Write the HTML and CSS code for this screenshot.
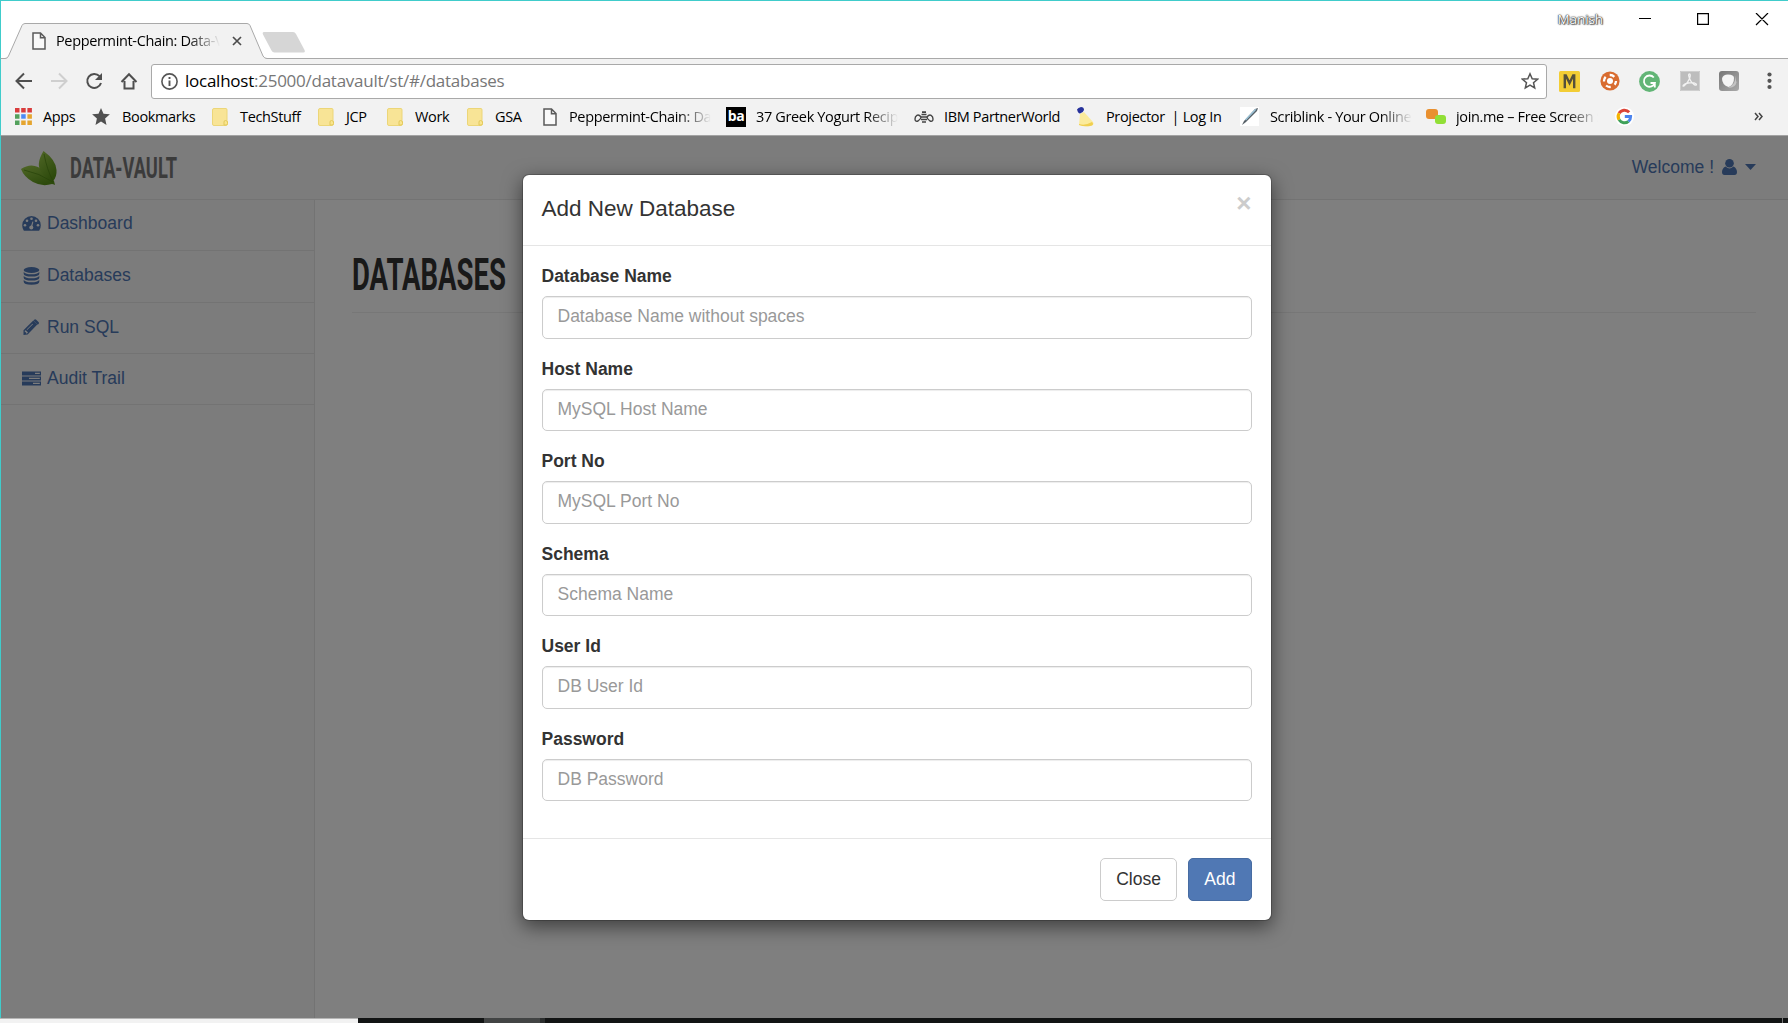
FILE: index.html
```html
<!DOCTYPE html>
<html lang="en">
<head>
<meta charset="utf-8">
<title>Peppermint-Chain: Data-Vault</title>
<link rel="stylesheet" href="styles.css">
</head>
<body>
<svg class="defs" aria-hidden="true">
  <symbol id="doc" viewBox="0 0 14 18"><path d="M1 1h7.5L13 5.500V17H1z M8.500 1v4.700H13" fill="#fff" fill-opacity=".5" stroke="#5a5a5a" stroke-width="1.500"/></symbol>
  <symbol id="folder" viewBox="0 0 16 18"><path d="M.5 2Q.5.5 2 .5h12Q15 .5 15 2v10.500q1 .5 1 2.500t-2 2.500H2Q.5 17.500.5 16z" fill="#f8e496" stroke="#ecd678"/><path d="M12 17v-3q0-1.500 1.500-1.500T15.500 14v1.500q0 1.500-1.500 1.500z" fill="#f9e58e" stroke="#e3c95c"/></symbol>
</svg>
<div class="window">
  <header class="titlebar">
    <svg class="tab-shape" width="310" height="37" viewBox="0 0 310 37">
      <path d="M0 35.500H4Q6.500 35.500 7.500 33L21 2.500Q22 .5 24 .5H246Q248 .5 249 2.500L262 33Q263.500 35.500 266 35.500H310V37H0z" fill="#f2f2f2"/>
      <path d="M0 35.500H4Q6.500 35.500 7.500 33L21 2.500Q22 .5 24 .5H246Q248 .5 249 2.500L262 33Q263.500 35.500 266 35.500H310" fill="none" stroke="#a9a9a9"/>
      <path d="M263 9h29q2 0 3 2l8.500 16q1 2.500-1 2.500h-29q-2 0-3-2l-8.500-16q-1-2.500 1-2.500z" fill="#d6d6d6"/>
    </svg>
    <div class="tab">
      <svg class="tab-icon" width="14" height="18"><use href="#doc"/></svg>
      <span class="ui-text fade tab-title">Peppermint-Chain: Data-Vault</span>
      <svg width="10" height="10" viewBox="0 0 10 10"><path d="M1 1l8 8M9 1L1 9" stroke="#4c4c4c" stroke-width="1.700"/></svg>
    </div>
    <div class="controls">
      <span class="profile">Manish</span>
      <svg width="130" height="14" viewBox="0 0 130 14" fill="none" stroke="#000" stroke-width="1.200"><path d="M0 5.500h12M58.600 .6h10.800v10.800H58.600zM117 0l12 12M129 0l-12 12"/></svg>
    </div>
  </header>

  <div class="toolbar">
    <svg class="nav-icons" width="124" height="20" viewBox="0 0 124 20" fill="none" stroke="#4f4f4f" stroke-width="2">
      <path d="M17 10H2M9 2.500L1.500 10 9 17.500"/>
      <path d="M36 10h15M44 2.500l7.500 7.500-7.500 7.500" stroke="#cfcfcf"/>
      <path d="M84.500 5.200A7 7 0 1 0 86 12"/><path d="M87 2v7h-7z" fill="#4f4f4f" stroke="none"/>
      <path d="M109.500 10v7.500h9V10M106.500 11L114 3.300l7.500 7.700"/>
    </svg>
    <div class="omnibox">
      <svg width="17" height="17" viewBox="0 0 17 17"><circle cx="8.500" cy="8.500" r="7.600" fill="none" stroke="#555" stroke-width="1.600"/><path d="M8.500 4v2M8.500 7.500v5.500" stroke="#555" stroke-width="1.900"/></svg>
      <span class="ui-text url"><b>localhost</b>:25000/datavault/st/#/databases</span>
      <svg class="star" width="18" height="18" viewBox="0 0 18 18"><path d="M9 1.800l2.200 4.900 5.300.5-4 3.500 1.200 5.200L9 13.200l-4.700 2.700 1.200-5.200-4-3.500 5.300-.5z" fill="none" stroke="#555" stroke-width="1.500"/></svg>
    </div>
    <div class="extensions">
      <svg width="21" height="21" viewBox="0 0 21 21"><rect width="21" height="21" rx="1.500" fill="#f3cd35"/><path d="M5.800 17.200V4.500h1L10.500 12l3.700-7.500h1v12.700" fill="none" stroke="#55503b" stroke-width="2.400"/></svg>
      <svg width="20" height="20" viewBox="0 0 20 20"><circle cx="10" cy="10" r="9.600" fill="#d96c30"/><circle cx="10" cy="10" r="3" fill="#fff"/><circle cx="10" cy="10" r="6" fill="none" stroke="#fff" stroke-width="2.300" stroke-dasharray="5 4.420" stroke-dashoffset="1"/></svg>
      <svg width="21" height="21" viewBox="0 0 21 21"><circle cx="10.500" cy="10.500" r="10.400" fill="#62b576"/><path d="M14.800 6.500A5.600 5.600 0 1 0 15.800 12H11.500M15.800 12v4.500" fill="none" stroke="#fff" stroke-width="1.800"/></svg>
      <svg width="20" height="20" viewBox="0 0 20 20"><rect width="20" height="20" fill="#bdbdbd"/><path d="M.5 .5h19v19H.5z" fill="none" stroke="#cfcfcf"/><path d="M9.500 3c2 0 0 8-5.500 12-2 1-1-2 4-3s8.500 0 8.500 1.500-4 0-6-4S8 3 9.500 3z" fill="none" stroke="#f2f2f2" stroke-width="1.300"/></svg>
      <svg width="20" height="20" viewBox="0 0 20 20"><defs><linearGradient id="shade" x2="1" y2="1"><stop stop-color="#777"/><stop offset="1" stop-color="#aaa"/></linearGradient></defs><rect width="20" height="20" rx="3" fill="url(#shade)"/><path d="M16 4.500q1.500 9-7 12 7 1 8.500-5z" fill="#c4c4c4"/><path d="M3 7.500Q4 3.500 9 3.500q6 0 6 3.500 0 7-5.500 9Q3 14 3 7.500z" fill="#f5f5f5"/></svg>
      <svg class="menu" width="5" height="18" viewBox="0 0 5 18" fill="#555"><circle cx="2.500" cy="2.500" r="2.100"/><circle cx="2.500" cy="8.800" r="2.100"/><circle cx="2.500" cy="15" r="2.100"/></svg>
    </div>
  </div>

  <nav class="bookmarks ui-text">
    <a class="bm f"><svg width="17" height="17" viewBox="0 0 17 17"><path d="M0 0h4.500v4.500H0zM6.200 0h4.500v4.500H6.200zM12.400 0h4.500v4.500h-4.500z" fill="#d93c3c"/><path d="M0 6.200h4.500v4.500H0zM0 12.400h4.500v4.500H0z" fill="#53a15c"/><path d="M6.200 6.200h4.500v4.500H6.200z" fill="#4c8bf5"/><path d="M12.400 6.200h4.500v4.500h-4.500zM6.200 12.400h4.500v4.500H6.200zM12.400 12.400h4.500v4.500h-4.500z" fill="#e5a52f"/></svg><span>Apps</span></a>
    <a class="bm"><svg width="18" height="17" viewBox="0 0 18 17"><path d="M9 0l2.500 5.800 6.400.5-4.800 4.200L14.500 17 9 13.400 3.500 17l1.400-6.500L.1 6.300l6.400-.5z" fill="#505050"/></svg><span>Bookmarks</span></a>
    <a class="bm f"><svg width="16" height="18"><use href="#folder"/></svg><span>TechStuff</span></a>
    <a class="bm f"><svg width="16" height="18"><use href="#folder"/></svg><span>JCP</span></a>
    <a class="bm f"><svg width="16" height="18"><use href="#folder"/></svg><span>Work</span></a>
    <a class="bm f"><svg width="16" height="18"><use href="#folder"/></svg><span>GSA</span></a>
    <a class="bm d"><svg width="14" height="18"><use href="#doc"/></svg><span class="fade">Peppermint-Chain: Data</span></a>
    <a class="bm"><i class="ba">ba</i><span class="fade">37 Greek Yogurt Recipes</span></a>
    <a class="bm"><svg width="20" height="14" viewBox="0 0 20 14" fill="none" stroke="#444" stroke-width="1.400"><path d="M7 7C4 3 1 6 1 9q0 3 3 2 3-2 3-4M13 7c3-4 6-1 6 2q0 3-3 2-3-2-3-4"/><path d="M7.500 4.500h5M7 7h6M7 9.500h6M8 12h4M8 2.200h4" stroke-width="1.700"/></svg><span>IBM PartnerWorld</span></a>
    <a class="bm"><svg class="projector" width="20" height="20" viewBox="0 0 20 20"><path d="M4 7l4-2 9 10q2 3-3 4-6 1-11-1z" fill="#fbeb9c"/><path d="M3 17q6 2 13-2 3 3-2 4-6 1-11-1z" fill="#f0cf50"/><path d="M1 2.500Q2 .5 5 0q3 0 3 3-1 3-4 3.500-2 0-3-4z" fill="#26319b"/></svg><span>Projector&nbsp; | Log In</span></a>
    <a class="bm"><svg width="19" height="19" viewBox="0 0 19 19"><path d="M0 0h19v19H0z" fill="#fff"/><path d="M2 18l2-4L15 2l3-1-1 3L6 15z" fill="#565f66"/><path d="M5 12.500L15 2l1.500.5L6 13.500z" fill="#9cc4d8"/></svg><span class="fade">Scriblink - Your Online</span></a>
    <a class="bm"><svg width="20" height="16" viewBox="0 0 20 16"><rect width="12" height="10" rx="3" fill="#e9902f"/><rect x="9" y="6" width="11" height="9" rx="3" fill="#91df36"/></svg><span class="fade">join.me – Free Screen S</span></a>
    <a class="bm"><svg width="19" height="19" viewBox="0 0 19 19"><circle cx="9.500" cy="9.500" r="9.500" fill="#fff"/><g fill="none" stroke-width="3"><path d="M14.200 5.200A6.300 6.300 0 0 0 4.100 6.300" stroke="#dc4437"/><path d="M4.100 6.300a6.300 6.300 0 0 0 0 6.500" stroke="#f4b400"/><path d="M4.100 12.800a6.300 6.300 0 0 0 9.400 1.500" stroke="#3fa15a"/><path d="M13.500 14.300a6.300 6.300 0 0 0 2.100-4.800H9.800" stroke="#4b83ee"/></g></svg></a>
    <svg class="overflow" width="9" height="9" viewBox="0 0 9 9"><path d="M1 1l3 3.500L1 8M5 1l3 3.500L5 8" fill="none" stroke="#444" stroke-width="1.500"/></svg>
  </nav>

  <div class="page">
    <header class="navbar">
      <svg width="36" height="35" viewBox="0 0 36 35"><defs><linearGradient id="leaf" x2=".6" y2="1"><stop stop-color="#a0ce4d"/><stop offset="1" stop-color="#5a9418"/></linearGradient></defs><path d="M0 18q9-6 17-2 7 4 16 14l1 4q-2-1-3-1-10 3-19-2Q3 26 0 18z" fill="url(#leaf)"/><path d="M22.500 0Q35 9 35.500 19q.5 7-3.500 11-7-2-11-8-7-8 1.500-22z" fill="url(#leaf)"/><path d="M23 3q3 16 9 27M3 19q15 3 29 12" fill="none" stroke="#4e8413" stroke-width=".7"/></svg>
      <svg class="brand" width="110" height="32" role="img"><text x="0" y="27" textLength="107" lengthAdjust="spacingAndGlyphs">DATA-VAULT</text></svg>
      <a class="account">Welcome !
        <svg width="15" height="16" viewBox="0 0 15 16"><path d="M3.500 7.500C1 8.500 0 11 0 13q0 3 2.500 3h10Q15 16 15 13c0-2-1-4.500-3.500-5.500Q9 9.500 7.500 9.500t-4-2z"/><circle cx="7.500" cy="4.300" r="4.300"/></svg>
        <svg width="11" height="6" viewBox="0 0 11 6"><path d="M0 0h11L5.500 6z"/></svg>
      </a>
    </header>
    <div class="content">
      <aside class="sidebar">
        <a><svg width="19" height="15" viewBox="0 0 19 15"><path fill-rule="evenodd" d="M9.500 0A9.300 9.300 0 0 0 .2 9.300Q.2 12 1.600 14.300q.3.500.8.500h14.200q.5 0 .8-.5 1.400-2.300 1.400-5A9.300 9.300 0 0 0 9.500 0z"/><g fill="#f8f8f8"><circle cx="3" cy="9.300" r="1.300"/><circle cx="5" cy="4.800" r="1.300"/><circle cx="9.500" cy="2.800" r="1.300"/><circle cx="14" cy="4.800" r="1.300"/><circle cx="16" cy="9.300" r="1.300"/><circle cx="9.300" cy="11.600" r="2"/><path d="M10.400 5.500l1 .3-1.400 6-1.500-.3z"/></g></svg>Dashboard</a>
        <a><svg width="19" height="18" viewBox="0 0 19 18"><ellipse cx="9.500" cy="3" rx="7.800" ry="3"/><path d="M1.700 5q2 2.300 7.800 2.300T17.300 5v1.700q0 2.800-7.800 2.800T1.700 6.700zM1.700 9q2 2.300 7.800 2.300T17.300 9v1.700q0 2.800-7.800 2.800T1.700 10.700zM1.700 13q2 2.300 7.800 2.300T17.300 13v1.800q0 3-7.800 3t-7.800-3z"/></svg>Databases</a>
        <a><svg width="19" height="16" viewBox="0 0 19 16"><path fill-rule="evenodd" d="M1.500 11.200L11.300 1.600l4 4-9.700 9.800-4.100.5zM12.200.8q1-1 2 0L16.500 3q1 1 0 2l-.7.700-4.200-4.200zM2.800 11.800v1.500H4v1.300l1-.2 1-1-2.200-2.200zM4.600 10.600l.5.500 5.900-5.900-.5-.5z"/></svg>Run SQL</a>
        <a><svg width="19" height="15" viewBox="0 0 19 15"><path d="M0 .5h19v4H0zM0 5.500h19v4H0zM0 10.500h19v4H0z"/><path fill="#f8f8f8" d="M13 1.800h4.800v1.300H13zM7 6.800h10.800v1.300H7zM11 11.800h6.800v1.300H11z"/></svg>Audit Trail</a>
      </aside>
      <main class="main">
        <h1><svg width="160" height="46" role="img"><text x="0" y="36" textLength="154" lengthAdjust="spacingAndGlyphs">DATABASES</text></svg></h1>
      </main>
    </div>
    <div class="backdrop">
      <form class="modal">
        <div class="modal-header"><h4>Add New Database</h4><span class="dismiss">×</span></div>
        <div class="modal-body">
          <label>Database Name</label><input placeholder="Database Name without spaces">
          <label>Host Name</label><input placeholder="MySQL Host Name">
          <label>Port No</label><input placeholder="MySQL Port No">
          <label>Schema</label><input placeholder="Schema Name">
          <label>User Id</label><input placeholder="DB User Id">
          <label>Password</label><input type="password" placeholder="DB Password">
        </div>
        <div class="modal-footer"><button type="button">Close</button><button type="button" class="primary">Add</button></div>
      </form>
    </div>
  </div>
  <footer class="taskbar"><span class="status"></span><span class="active-app"></span><span class="next-app"></span><span class="show-desktop"></span></footer>
</div>
</body>
</html>
```

FILE: styles.css
```css
* { box-sizing: border-box; }
body { margin: 0; background: #fff; font: 17.5px/25px "Liberation Sans", Arial, sans-serif; color: #333; overflow: hidden; }
svg { display: block; flex: none; }
.defs { position: absolute; width: 0; height: 0; }
.window { height: 1023px; display: flex; flex-direction: column; border-top: 1px solid #40cccb; }
.ui-text { font-family: "Open Sans", "Noto Sans", sans-serif; font-size: 14.5px; letter-spacing: -.35px; line-height: 20px; color: #000; white-space: nowrap; }
.fade { overflow: hidden; -webkit-mask-image: linear-gradient(90deg, #000 calc(100% - 32px), transparent); mask-image: linear-gradient(90deg, #000 calc(100% - 32px), transparent); }

.titlebar { position: relative; height: 58px; flex: none; display: flex; justify-content: space-between; border-left: 1px solid #40cccb; border-bottom: 1px solid #a9a9a9; }
.tab-shape { position: absolute; left: 0; top: 22px; }
.tab { position: relative; display: flex; align-items: center; height: 36px; margin: 22px 0 0 31px; }
.tab-title { width: 164px; margin: 0 12px 0 10px; }
.controls { display: flex; gap: 36px; padding: 11px 19px 0 0; align-items: flex-start; }
.controls svg { margin-top: 1px; }
.profile { font: 13.500px/15px "Open Sans", sans-serif; letter-spacing: -.1px; color: #fff; text-shadow: 0 0 1px #333, 0 0 1px #333, 0 0 2px #555, 1px 1px 1px #777; }

.toolbar { height: 42px; flex: none; display: flex; align-items: center; padding: 2px 16px 0 14px; background: #f2f2f2; border-left: 1px solid #40cccb; }
.nav-icons { margin-right: 12px; }
.omnibox { width: 1396px; flex: none; height: 35px; display: flex; align-items: center; padding: 0 7px 0 9px; background: #fff; border: 1px solid #a9a9a9; border-radius: 3px; }
.url { margin-left: 7px; font-size: 17px; letter-spacing: -.25px; color: #777; }
.url b { font-weight: 400; color: #000; }
.star { margin-left: auto; }
.extensions { display: flex; align-items: center; gap: 19.5px; margin-left: 12px; }
.menu { margin-left: 8px; }

.bookmarks { height: 35px; flex: none; display: grid; grid-template-columns: 77px 120px 106px 69px 80px 76px 183px 188px 162px 164px 186px 189px 139px 9px; align-items: center; padding: 0 0 3px 14px; background: #f2f2f2; border-left: 1px solid #40cccb; border-bottom: 1px solid #a3a3a3; }
.bm { display: grid; grid-template-columns: 30px auto; align-items: center; justify-content: start; }
.bm.f { grid-template-columns: 28px auto; }
.bm.d { grid-template-columns: 26px auto; }
.bm .fade { width: 142px; }
.ba { width: 20px; height: 20px; background: #000; color: #fff; font: 700 14px/18px "Open Sans", sans-serif; text-align: center; letter-spacing: -.5px; }

.page { position: relative; height: 882px; flex: none; display: flex; flex-direction: column; background: #fff; }
.navbar { height: 64px; flex: none; display: flex; padding: 15px 32px 0 21px; background: #f8f8f8; border-bottom: 1px solid #e7e7e7; }
.brand { margin-left: 12.5px; }
.brand text { font: 700 29.5px Roboto, sans-serif; fill: #777; }
.account { display: flex; align-items: center; height: 32px; margin-left: auto; color: #4f77b4; gap: 8px; }
.account svg, .sidebar svg { fill: #4f77b4; }
.content { flex: 1; display: flex; }
.sidebar { width: 315px; background: #f8f8f8; border-right: 1px solid #e7e7e7; }
.sidebar a { display: flex; align-items: center; height: 51.25px; padding: 0 0 1px 22px; gap: 6px; color: #4f77b4; border-bottom: 1px solid #e7e7e7; }
.sidebar a:first-child { padding-bottom: 3px; }
.main { flex: 1; padding: 49px 32px 0 37px; }
h1 { height: 64px; margin: 0; padding-top: 5px; border-bottom: 1px solid #eee; }
h1 text { font: 700 45px Roboto, sans-serif; fill: #333; }

.backdrop { position: absolute; inset: 0; display: flex; justify-content: center; align-items: flex-start; background: rgba(0, 0, 0, .5); padding: 38px 0 0 4px; border-left: 1px solid #40cccb; }
.modal { width: 750px; height: 747px; background: #fff; border: 1px solid rgba(0, 0, 0, .2); background-clip: padding-box; border-radius: 7px; box-shadow: 0 6px 19px rgba(0, 0, 0, .5); }
.modal-header { height: 71px; display: flex; justify-content: space-between; padding: 18px 19px; border-bottom: 1px solid #e5e5e5; }
h4 { margin: 0; font-size: 22.5px; line-height: 32px; font-weight: 400; }
.dismiss { font-size: 26px; font-weight: 700; line-height: 21px; color: #ccc; }
.modal-body { padding: 18px 19px 0; height: 592px; }
.modal-body label { display: block; height: 25px; margin-bottom: 7.25px; font-weight: 700; }
.modal-body input { display: block; width: 100%; height: 42.5px; margin-bottom: 17.75px; padding: 6px 15px 8px; font: inherit; border: 1px solid #ccc; border-radius: 5px; box-shadow: inset 0 1px 1px rgba(0, 0, 0, .075); }
.modal-body input::placeholder { color: #999; opacity: 1; }
.modal-footer { display: flex; justify-content: flex-end; gap: 11px; padding: 19px; border-top: 1px solid #e5e5e5; }
.modal-footer button { height: 42.5px; padding: 0 15.4px; font: inherit; color: #333; background: #fff; border: 1px solid #ccc; border-radius: 5px; }
.modal-footer .primary { padding: 0 15px; color: #fff; background: #5078b4; border-color: #476ca2; }

.taskbar { flex: 1; display: flex; background: #121414; }
.status { width: 358px; background: #f2f2f2; border-top: 1px solid #b5b5b5; }
.active-app { width: 56px; margin-left: 126px; background: #424444; }
.next-app { width: 5px; background: #2b2d2d; }
.show-desktop { width: 6px; margin-left: auto; border-left: 1px solid #777; }
```
